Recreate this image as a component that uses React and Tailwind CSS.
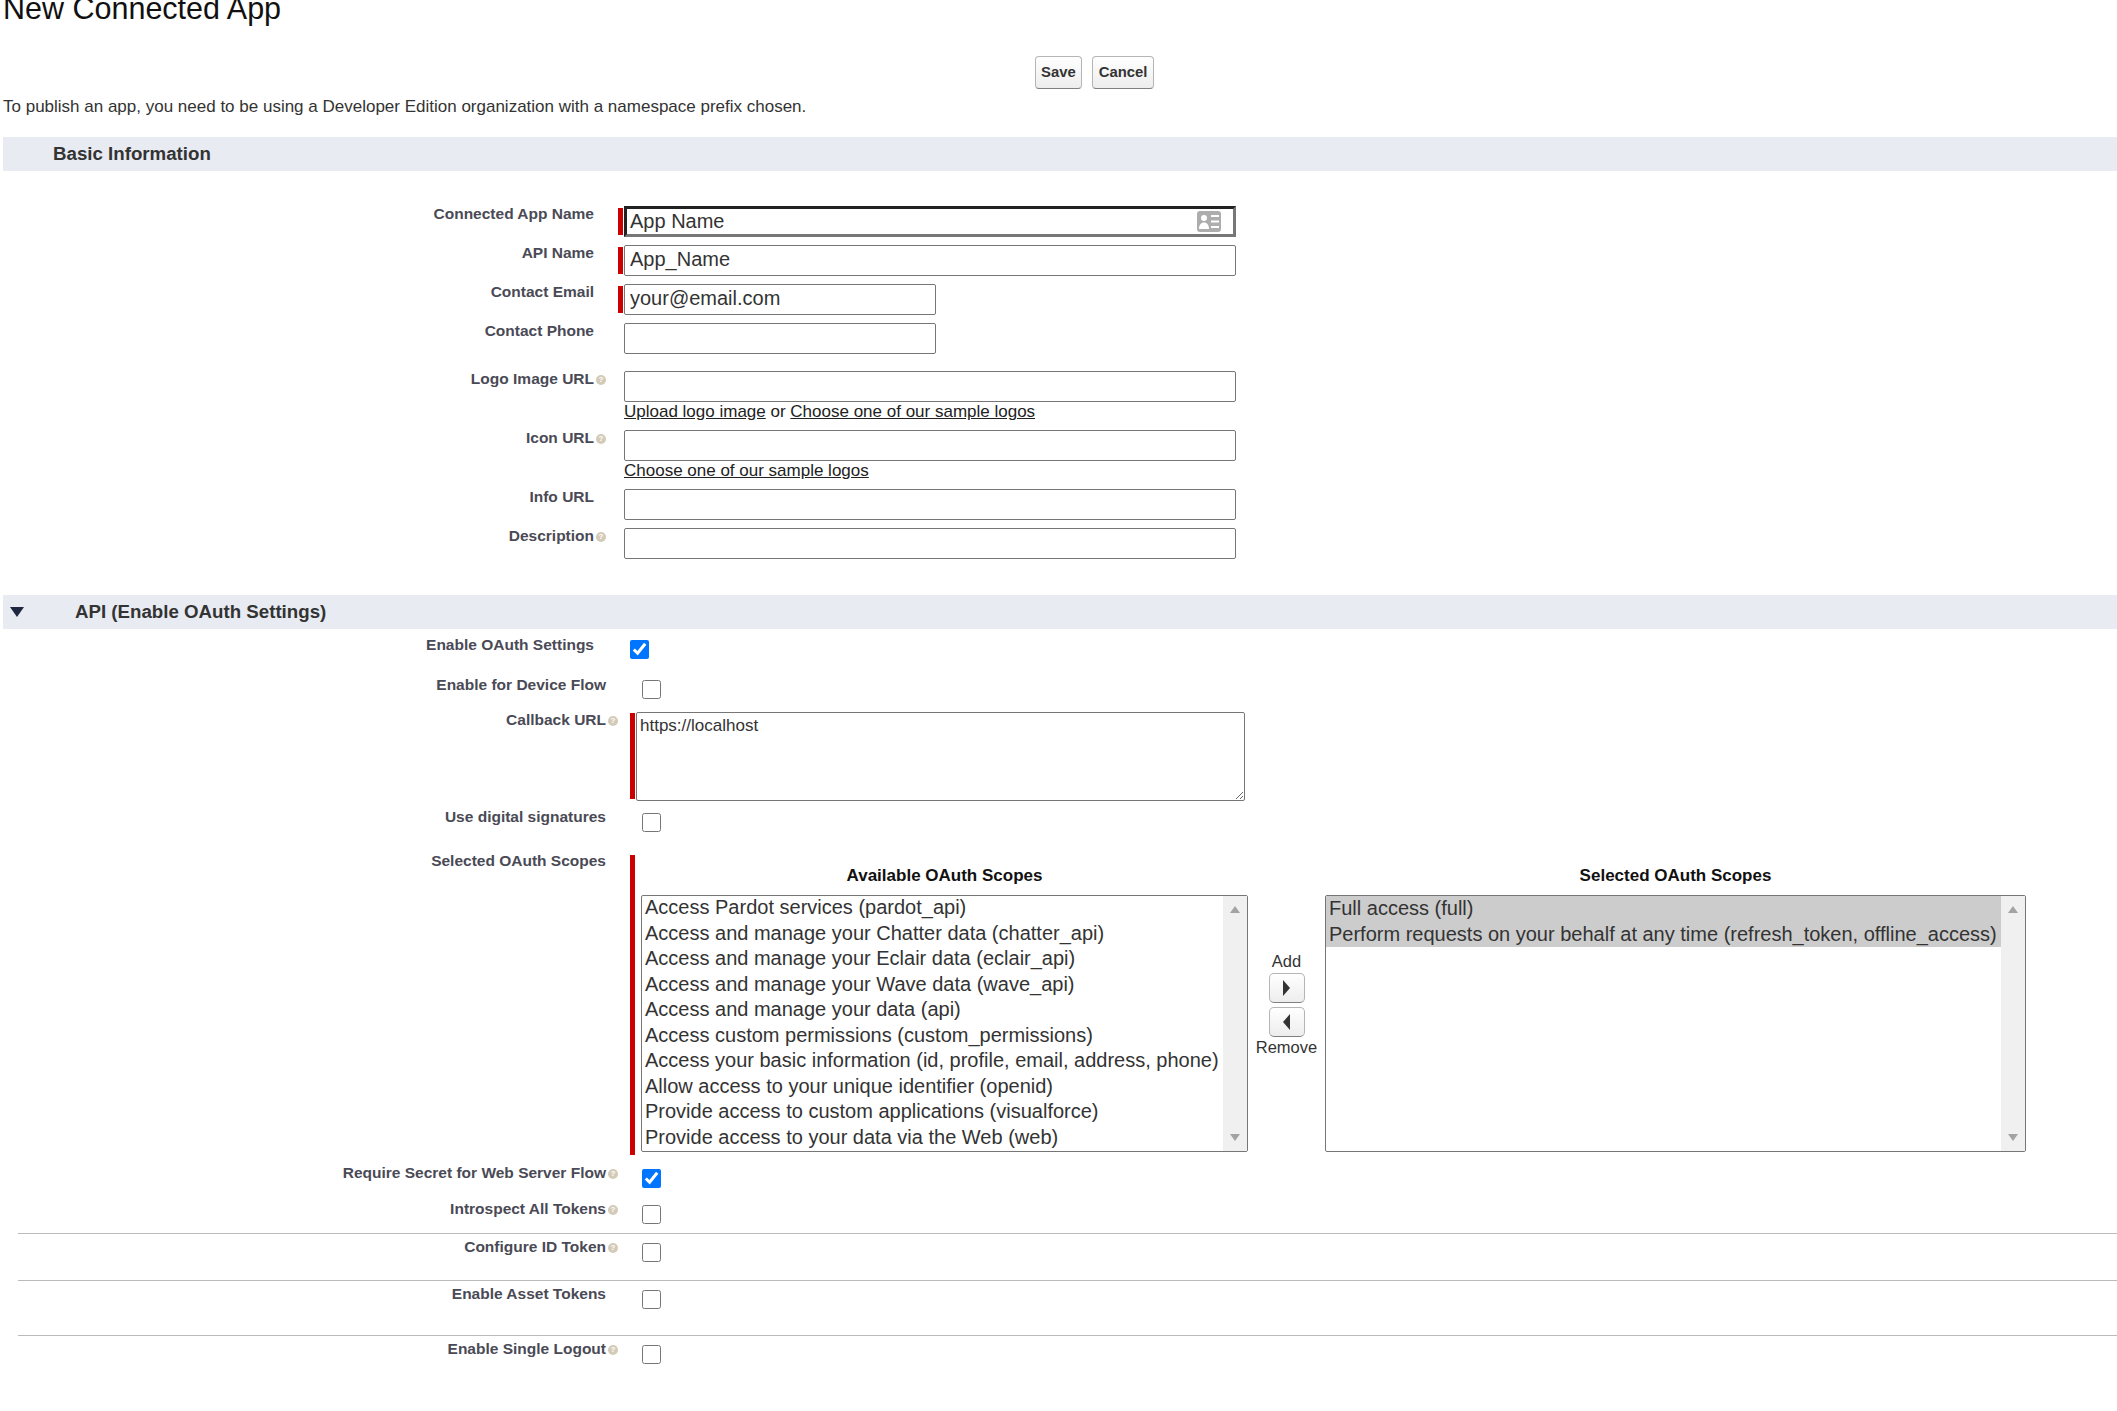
import React from 'react'

const sans = { fontFamily: '"Liberation Sans", Arial, sans-serif' }

function Help() {
  return (
    <span className="inline-flex items-center justify-center w-[10px] h-[10px] rounded-full bg-[#d3cbb8] text-white text-[8px] leading-none font-bold">?</span>
  )
}

function Label({ text, help, width = 'w-[594px]', className = '' }) {
  return (
    <div className={`${width} shrink-0 flex justify-end text-[15.5px] leading-[18px] font-bold text-[#4a4a56] relative ${className}`}>
      {text}
      {help && <span className="absolute -right-[12px] top-[5px] flex"><Help /></span>}
    </div>
  )
}

function ReqBar({ className }) {
  return <div className={`w-[5px] bg-[#c00] shrink-0 ${className}`} />
}

function TextField({ wide = true, value = '', focused }) {
  const w = wide ? 'w-[612px]' : 'w-[312px]'
  if (focused) {
    return (
      <div className="w-[612px] h-[31px] border-[3px] border-t-[#222] border-l-[#222] border-r-[#777] border-b-[#777] flex items-center justify-between pl-[3px] pr-[12px] pb-[1px] text-[20px] text-[#333]">
        <span>{value}</span>
        <svg width="24" height="21" viewBox="0 0 24 21" className="shrink-0">
          <rect width="24" height="21" rx="3" fill="#adadad" />
          <circle cx="7" cy="7" r="3" fill="#fff" />
          <path d="M2 18c0-4 2-6.5 5-6.5s5 2.500 5 6.500z" fill="#fff" />
          <path d="M14 5h8M14 10.500h8M14 16h8" stroke="#fff" strokeWidth="2" />
        </svg>
      </div>
    )
  }
  return (
    <input
      readOnly
      value={value}
      className={`${w} h-[31px] border border-[#767676] rounded-[2px] px-[5px] pb-[2px] text-[20px] text-[#333] outline-none bg-white`}
    />
  )
}

function Check({ checked }) {
  return <input type="checkbox" readOnly checked={!!checked} className="w-[19px] h-[19px] m-0 block" />
}

function SectionBar({ children }) {
  return (
    <div className="ml-[3px] h-[34px] bg-[#e8ebf2] flex items-center text-[18.7px] font-bold text-[#333] leading-none">
      {children}
    </div>
  )
}

function FieldRow({ label, help, h, bar, children, sub }) {
  return (
    <div className={`flex ${h}`}>
      <Label text={label} help={help} className="-mt-[1px]" />
      <div className="w-[30px] shrink-0 flex justify-end">{bar ? <ReqBar className="h-[27px] mt-[2px] mr-[1px]" /> : null}</div>
      <div className="flex flex-col">
        {children}
        {sub}
      </div>
    </div>
  )
}

function CheckRow({ label, help, h, pad, children }) {
  return (
    <div className={`flex ${h}`}>
      <Label text={label} help={help} width="w-[606px]" />
      <div className={`ml-[36px] ${pad}`}>{children}</div>
    </div>
  )
}

function Scrollbar() {
  return (
    <div className="w-[24px] shrink-0 bg-[#f0f0f0] flex flex-col items-center justify-between py-[10px]">
      <div className="w-0 h-0 border-x-[5.500px] border-x-transparent border-b-[7px] border-b-[#a3a3a3]" />
      <div className="w-0 h-0 border-x-[5.500px] border-x-transparent border-t-[7px] border-t-[#a3a3a3]" />
    </div>
  )
}

function ArrowButton({ dir }) {
  return (
    <div className="w-[36px] h-[30px] rounded-[5px] border border-[#b5b5b5] border-b-[#7f7f7f] bg-gradient-to-b from-white to-[#ededed] flex items-center justify-center">
      {dir === 'right' ? (
        <div className="w-0 h-0 border-y-[8px] border-y-transparent border-l-[7px] border-l-[#333]" />
      ) : (
        <div className="w-0 h-0 border-y-[8px] border-y-transparent border-r-[7px] border-r-[#333]" />
      )}
    </div>
  )
}

const available = [
  'Access Pardot services (pardot_api)',
  'Access and manage your Chatter data (chatter_api)',
  'Access and manage your Eclair data (eclair_api)',
  'Access and manage your Wave data (wave_api)',
  'Access and manage your data (api)',
  'Access custom permissions (custom_permissions)',
  'Access your basic information (id, profile, email, address, phone)',
  'Allow access to your unique identifier (openid)',
  'Provide access to custom applications (visualforce)',
  'Provide access to your data via the Web (web)',
]

const selected = [
  'Full access (full)',
  'Perform requests on your behalf at any time (refresh_token, offline_access)',
]

export default function App() {
  return (
    <div style={sans} className="w-[2117px] h-[1411px] bg-white overflow-hidden text-[17px] text-[#222]">
      <h1 className="text-[30.500px] leading-[30px] -mt-[7px] pl-[3px] text-[#111] font-normal">New Connected App</h1>

      {/* Buttons */}
      <div className="flex gap-[10px] pl-[1035px] mt-[33px]">
        <button className="h-[33px] px-[5px] rounded-[4px] border border-[#b5b5b5] border-b-[#7f7f7f] bg-gradient-to-b from-white to-[#ededed] text-[14.85px] font-bold text-[#333]">Save</button>
        <button className="h-[33px] px-[6px] rounded-[4px] border border-[#b5b5b5] border-b-[#7f7f7f] bg-gradient-to-b from-white to-[#ededed] text-[14.85px] font-bold text-[#333]">Cancel</button>
      </div>

      <p className="pl-[3px] mt-[5px] leading-[26px] mb-[17px] text-[#333]">To publish an app, you need to be using a Developer Edition organization with a namespace prefix chosen.</p>

      <SectionBar><span className="pl-[50px]">Basic Information</span></SectionBar>

      {/* Basic info */}
      <div className="pt-[35px] h-[424px]">
        <FieldRow label="Connected App Name" h="h-[39px]" bar><TextField focused value="App Name" /></FieldRow>
        <FieldRow label="API Name" h="h-[39px]" bar><TextField value="App_Name" /></FieldRow>
        <FieldRow label="Contact Email" h="h-[39px]" bar><TextField wide={false} value="your@email.com" /></FieldRow>
        <FieldRow label="Contact Phone" h="h-[48px]"><TextField wide={false} /></FieldRow>
        <FieldRow
          label="Logo Image URL"
          help
          h="h-[59px]"
          sub={<div className="leading-[20px] text-[#222]"><a className="underline">Upload logo image</a> or <a className="underline">Choose one of our sample logos</a></div>}
        >
          <TextField />
        </FieldRow>
        <FieldRow
          label="Icon URL"
          help
          h="h-[59px]"
          sub={<div className="leading-[20px] text-[#222]"><a className="underline">Choose one of our sample logos</a></div>}
        >
          <TextField />
        </FieldRow>
        <FieldRow label="Info URL" h="h-[39px]"><TextField /></FieldRow>
        <FieldRow label="Description" help h="h-[39px]"><TextField /></FieldRow>
      </div>

      <SectionBar>
        <div className="w-0 h-0 ml-[7px] border-x-[7px] border-x-transparent border-t-[10px] border-t-[#1f2740]" />
        <span className="pl-[51px]">API (Enable OAuth Settings)</span>
      </SectionBar>

      {/* OAuth */}
      <div className="pt-[7px]">
        <div className="flex h-[40px]">
          <Label text="Enable OAuth Settings" />
          <div className="ml-[36px] pt-[4px]"><Check checked /></div>
        </div>
        <CheckRow label="Enable for Device Flow" h="h-[35px]" pad="pt-[4px]"><Check /></CheckRow>

        <div className="flex h-[97px]">
          <Label text="Callback URL" help width="w-[606px]" />
          <ReqBar className="h-[86px] ml-[24px] mt-[2px]" />
          <textarea
            readOnly
            value="https://localhost"
            className="w-[609px] h-[89px] ml-[1px] mt-[1px] border border-[#767676] rounded-[2px] px-[3px] py-[3px] text-[17px] leading-[20px] text-[#333] outline-none"
          />
        </div>

        <CheckRow label="Use digital signatures" h="h-[44px]" pad="pt-[5px]"><Check /></CheckRow>

        <div className="flex h-[312px]">
          <Label text="Selected OAuth Scopes" width="w-[606px]" />
          <ReqBar className="h-[300px] ml-[24px] mt-[3px]" />
          <div className="flex items-start ml-[6px]">
            <div className="w-[607px]">
              <div className="h-[43px] pt-[15px] text-center text-[17px] leading-[18px] font-bold text-[#111]">Available OAuth Scopes</div>
              <div className="flex h-[257px] border border-[#767676] rounded-[2px] text-[20px] leading-[25.500px] text-[#333]">
                <div className="flex-1 px-[3px] -mt-[1px] whitespace-nowrap overflow-hidden">
                  {available.map(s => <div key={s}>{s}</div>)}
                </div>
                <Scrollbar />
              </div>
            </div>

            <div className="w-[77px] flex flex-col items-center pt-[99px] text-[16.500px] text-[#333]">
              <div className="leading-[20px] mb-[2px]">Add</div>
              <ArrowButton dir="right" />
              <div className="h-[4px]" />
              <ArrowButton dir="left" />
              <div className="leading-[20px]">Remove</div>
            </div>

            <div className="w-[701px]">
              <div className="h-[43px] pt-[15px] text-center text-[17px] leading-[18px] font-bold text-[#111]">Selected OAuth Scopes</div>
              <div className="flex h-[257px] border border-[#767676] rounded-[2px] text-[20px] leading-[25.500px] text-[#333]">
                <div className="flex-1 whitespace-nowrap overflow-hidden">
                  {selected.map(s => <div key={s} className="bg-[#ccc] px-[3px]">{s}</div>)}
                </div>
                <Scrollbar />
              </div>
            </div>
          </div>
        </div>

        <CheckRow label="Require Secret for Web Server Flow" help h="h-[36px]" pad="pt-[5px]"><Check checked /></CheckRow>
        <CheckRow label="Introspect All Tokens" help h="h-[33px]" pad="pt-[5px]"><Check /></CheckRow>
        <div className="ml-[18px] h-[5px] border-t border-[#bbb]" />
        <CheckRow label="Configure ID Token" help h="h-[42px]" pad="pt-[5px]"><Check /></CheckRow>
        <div className="ml-[18px] h-[5px] border-t border-[#bbb]" />
        <CheckRow label="Enable Asset Tokens" h="h-[50px]" pad="pt-[5px]"><Check /></CheckRow>
        <div className="ml-[18px] h-[5px] border-t border-[#bbb]" />
        <CheckRow label="Enable Single Logout" help h="h-[40px]" pad="pt-[5px]"><Check /></CheckRow>
      </div>
    </div>
  )
}
